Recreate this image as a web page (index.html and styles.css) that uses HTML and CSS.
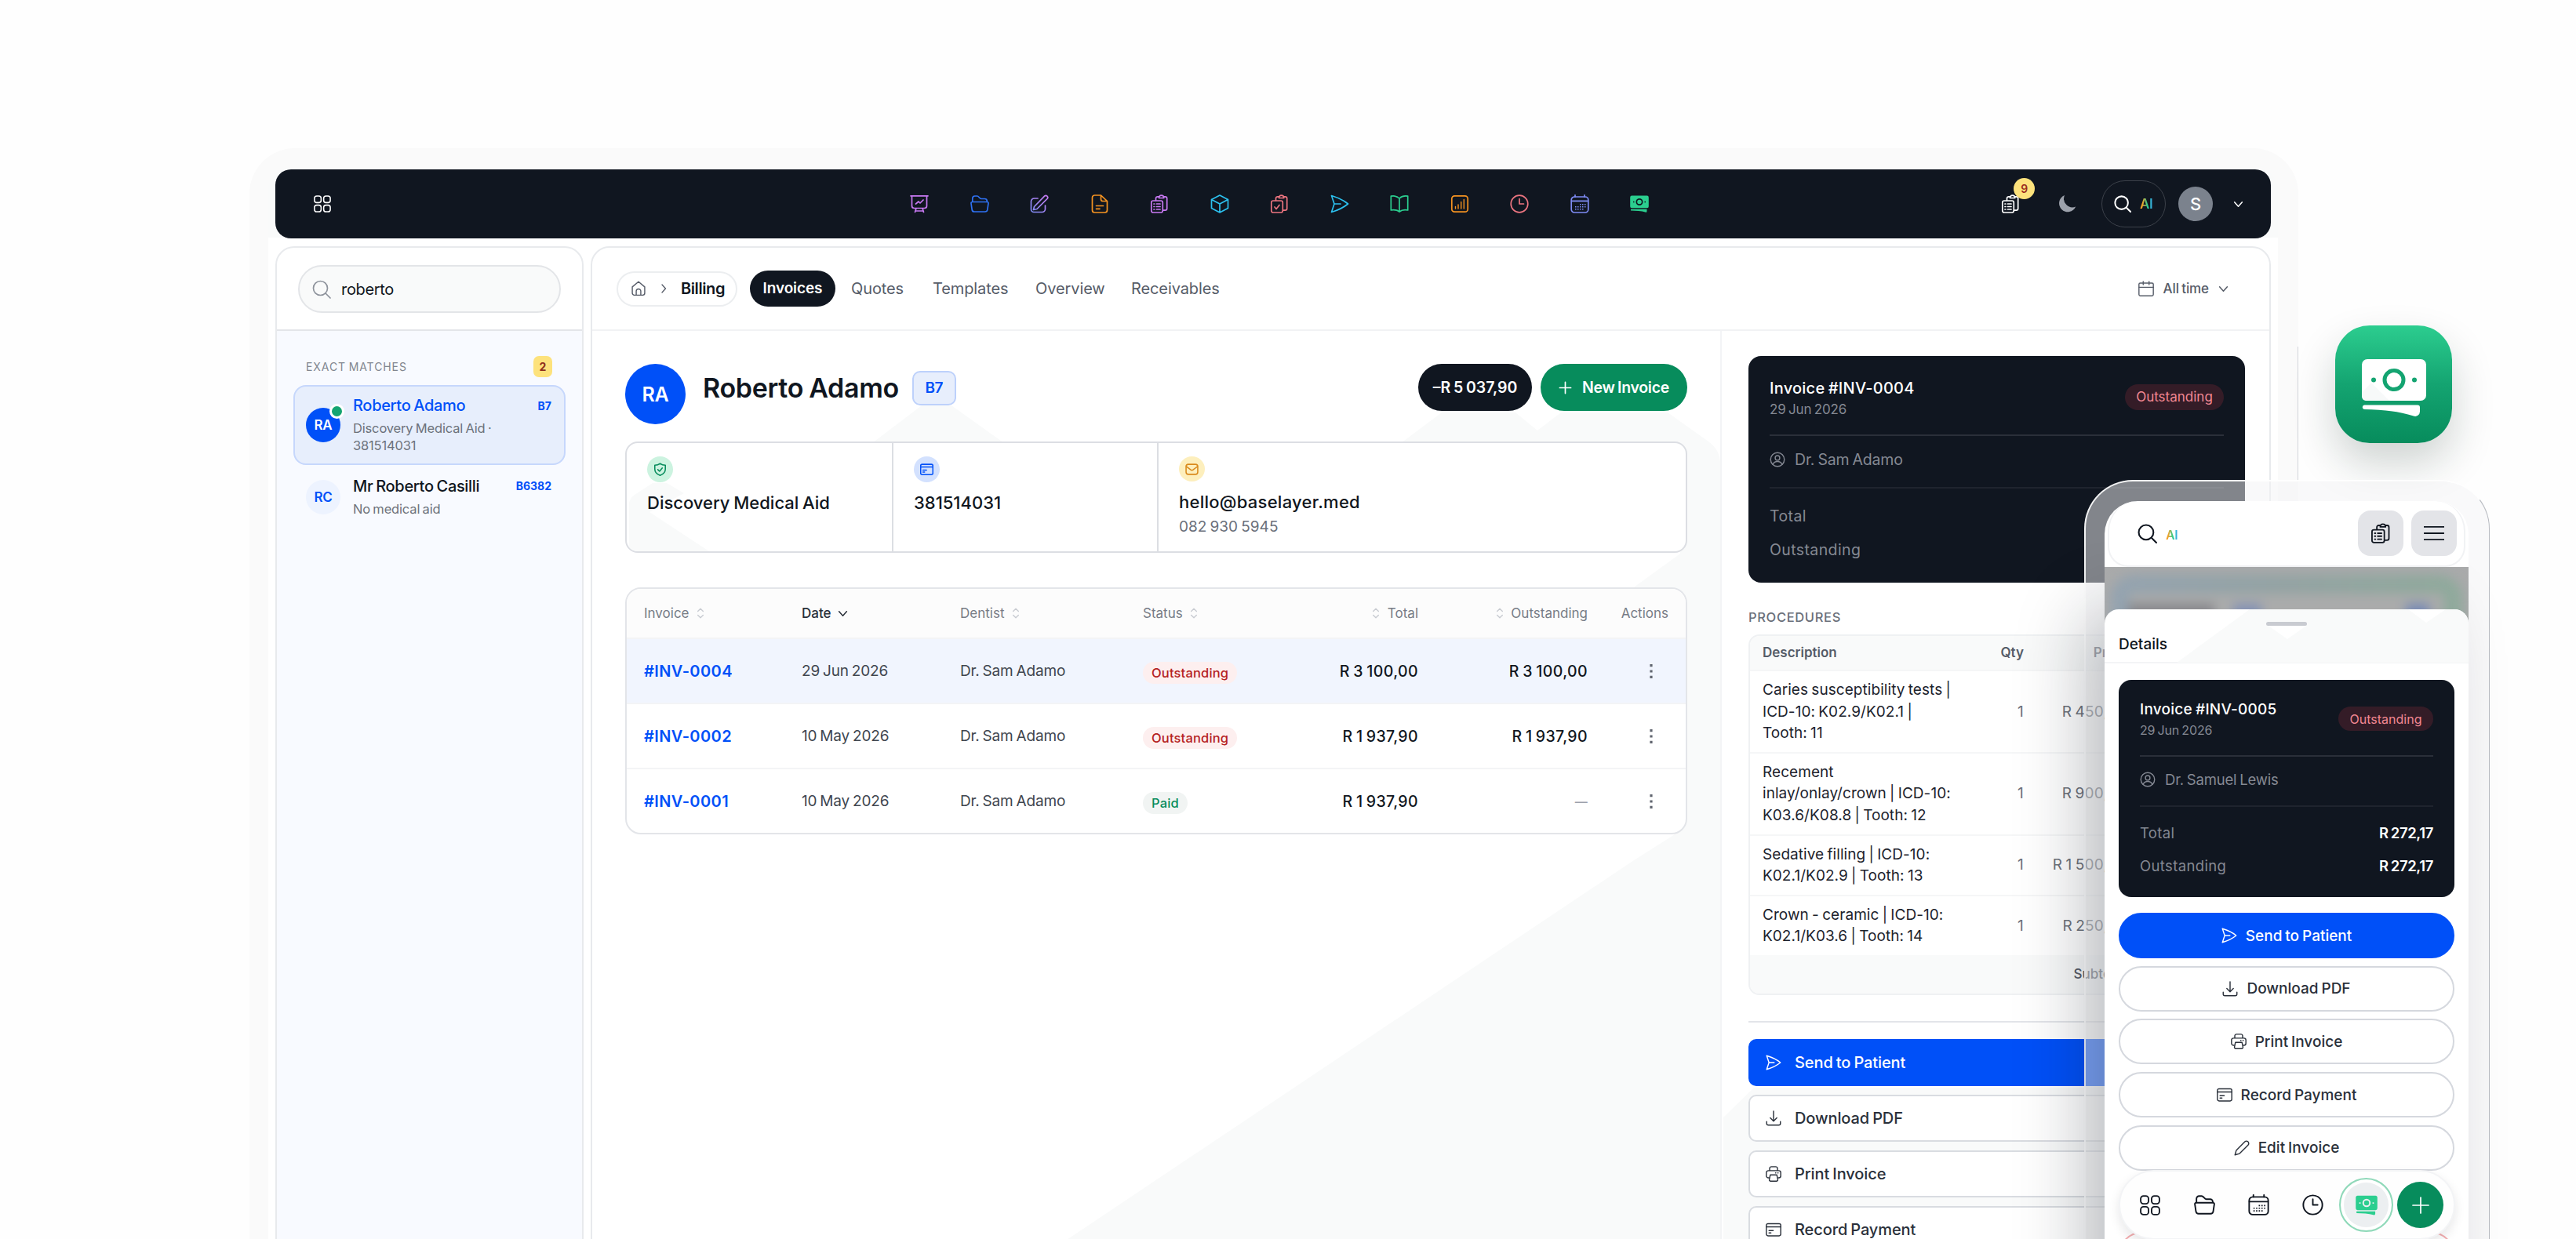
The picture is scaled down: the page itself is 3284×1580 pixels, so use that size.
FILE: index.html
```html
<!DOCTYPE html>
<html lang="en">
<head>
    <meta charset="UTF-8">
    <title>Billing - Invoices</title>
    <link rel="stylesheet" href="styles.css">
</head>
<body>

<!-- icon set -->
<svg class="sprite" xmlns="http://www.w3.org/2000/svg">
    <defs>
        <linearGradient id="violet" x1="0" y1="1" x2="1" y2="0"><stop offset="0" stop-color="#7d8cf5"/><stop offset="1" stop-color="#c77af0"/></linearGradient>
        <symbol id="grid" viewBox="0 0 24 24"><rect x="1" y="1" width="9.200" height="9.200" rx="3.200"/><rect x="13.800" y="1" width="9.200" height="9.200" rx="3.200"/><rect x="1" y="13.800" width="9.200" height="9.200" rx="3.200"/><rect x="13.800" y="13.800" width="9.200" height="9.200" rx="3.200"/></symbol>
        <symbol id="board" viewBox="0 0 24 24"><path d="M1 1.800h22M2.500 2v12.500a3 3 0 0 0 3 3h13a3 3 0 0 0 3-3V2M8 17.500l-1.500 5M16 17.500l1.500 5M7 21h10M7.500 12l3.500-3 2 2 4-4"/></symbol>
        <symbol id="folder" viewBox="0 0 24 24"><path d="M2.800 9.500V5a3 3 0 0 1 3-3h3c2 0 3 3.500 5 3.500h4.500a3 3 0 0 1 3 3v1M2.500 9.500h19a1.500 1.500 0 0 1 1.500 1.800l-1.200 8.200a3 3 0 0 1-3 2.500H5.200a3 3 0 0 1-3-2.500L1 11.300a1.500 1.500 0 0 1 1.500-1.800z"/></symbol>
        <symbol id="compose" viewBox="0 0 24 24"><path d="M10 5H5.500a4 4 0 0 0-4 4v10a3.500 3.500 0 0 0 3.500 3.500h10.500a4 4 0 0 0 4-4V14M5.500 15.500L18.500 2.200a2.300 2.300 0 0 1 3.500 3.300L9 18.500l-4.500 1z"/></symbol>
        <symbol id="file" viewBox="0 0 24 24"><path d="M13.500 1H5.500a3 3 0 0 0-3 3v16a3 3 0 0 0 3 3h13a3 3 0 0 0 3-3V8.500zM13.500 1v5A2.500 2.500 0 0 0 16 8.500h5.500M7.500 14.500h9M7.500 18.300h4.500"/></symbol>
        <symbol id="clips" viewBox="0 0 24 24"><path d="M7.500 7.500V5A2.200 2.200 0 0 1 9.700 2.800h2M17.500 2.800h2A2.200 2.200 0 0 1 21.700 5v13a2.200 2.200 0 0 1-2.200 2.200h-3M11.500 4.500c0-2 1-3.300 3-3.300s3.200 1.300 3.200 3.300z"/><rect x="1.800" y="8" width="14.500" height="15" rx="2.200"/><path d="M5 12h.8M8.500 12h4.500M5 15.500h.8M8.500 15.500h4.500M5 19h.8M8.500 19h4.500"/></symbol>
        <symbol id="clipcheck" viewBox="0 0 24 24"><path d="M7.500 7.500V5A2.200 2.200 0 0 1 9.700 2.800h2M17.500 2.800h2A2.200 2.200 0 0 1 21.700 5v13a2.200 2.200 0 0 1-2.200 2.200h-3M11.500 4.500c0-2 1-3.300 3-3.300s3.200 1.300 3.200 3.300z"/><rect x="1.800" y="8" width="14.500" height="15" rx="2.200"/><path d="M6 16l2 2.500 4-5"/></symbol>
        <symbol id="box" viewBox="0 0 24 24"><path d="M12 1l10.500 5.500v11L12 23 1.500 17.500v-11zM1.500 6.500L12 12l10.500-5.500M12 12v11"/></symbol>
        <symbol id="send" viewBox="0 0 24 24"><path d="M1.500 1.500C10 4 17 7.500 22.500 12 17 16.500 10 20 1.500 22.500L5 12zM5 12h8"/></symbol>
        <symbol id="book" viewBox="0 0 24 24"><path d="M12 5C9 2.200 5 1.500 1.300 2.200V20c4-.7 8-.2 10.700 2 2.700-2.200 6.700-2.700 10.700-2V2.200C19 1.500 15 2.200 12 5zM12 5v17"/></symbol>
        <symbol id="chart" viewBox="0 0 24 24"><rect x="1.800" y="1.800" width="20.400" height="20.400" rx="3.500"/><path stroke-width="1.400" d="M6.500 18v-2.500M10 18v-5M13.700 18V9.500M17.300 18V6.500"/></symbol>
        <symbol id="clock" viewBox="0 0 24 24"><circle cx="12" cy="12" r="10.800"/><path d="M12 5.500V12h5.500"/></symbol>
        <symbol id="calendar" viewBox="0 0 24 24"><rect x="1.200" y="3" width="21.600" height="20" rx="4"/><path d="M1.500 8.300h21M6 .8V3M18 .8V3"/><path fill="currentColor" stroke="none" d="M12 12h1.500v1.500H12zm3 0h1.500v1.500H15zm3 0h1.500v1.500H18zM6 15h1.500v1.500H6zm3 0h1.500v1.500H9zm3 0h1.500v1.500H12zm3 0h1.500v1.500H15zm3 0h1.500v1.500H18zM6 18h1.500v1.500H6zm3 0h1.500v1.500H9zm3 0h1.500v1.500H12zm3 0h1.500v1.500H15z"/></symbol>
        <symbol id="cash" viewBox="0 0 24 24"><path fill="currentColor" stroke="none" fill-rule="evenodd" d="M2.500 1.500h19A2.200 2.200 0 0 1 23.800 3.700v11.600a2 2 0 0 1-2 2H2.200a2 2 0 0 1-2-2V3.700a2.200 2.200 0 0 1 2.300-2.200zM12 5a4.500 4.500 0 1 0 0 9 4.500 4.500 0 0 0 0-9zm0 1.700a2.800 2.800 0 1 1 0 5.600 2.800 2.800 0 0 1 0-5.600zM4 8.700v1.600h1.500V8.700zm14.500 0v1.600H20V8.700zM1 18.700h20.500v2.500a1.500 1.500 0 0 1-2 1.400c-5-1.600-12-1.900-18.500-2.100z"/></symbol>
        <symbol id="moon" viewBox="0 0 24 24"><path fill="currentColor" stroke="none" d="M9 1A11 11 0 1 0 23.200 15.500 11 11 0 0 1 9 1z"/></symbol>
        <symbol id="search" viewBox="0 0 24 24"><circle cx="10.500" cy="10.500" r="9"/><path d="M17.500 17.500L23 23"/></symbol>
        <symbol id="down" viewBox="0 0 12 12"><path d="M1.500 3.500L6 8.500l4.500-5"/></symbol>
        <symbol id="right" viewBox="0 0 12 12"><path d="M4 1l4.500 5L4 11"/></symbol>
        <symbol id="sort" viewBox="0 0 12 18"><path d="M2 6l4-4 4 4M2 12l4 4 4-4"/></symbol>
        <symbol id="home" viewBox="0 0 24 24"><path d="M2.500 9.500L12 1.500l9.500 8V19a3 3 0 0 1-3 3h-13a3 3 0 0 1-3-3zM8.500 22v-6a3.500 3.500 0 0 1 7 0v6"/></symbol>
        <symbol id="date" viewBox="0 0 24 24"><rect x="1" y="3.500" width="22" height="19.500" rx="2"/><path d="M1 10h22M7.500 1v5M16.500 1v5"/></symbol>
        <symbol id="shield" viewBox="0 0 24 24"><path d="M12 1.500c3 2.300 6 3 9.500 3v7c0 5-3.500 9-9.500 11.500C6 20.500 2.500 16.500 2.500 11.500v-7c3.500 0 6.500-.7 9.500-3zM8 12.500l3 3 5-6"/></symbol>
        <symbol id="card" viewBox="0 0 24 24"><rect x="1" y="3" width="22" height="18.500" rx="2.500"/><path d="M1 7.700h22M5 13.500h6.500M5 17h3"/></symbol>
        <symbol id="mail" viewBox="0 0 24 24"><rect x="1.500" y="3" width="21" height="18" rx="4"/><path d="M2 7l8 6a3.500 3.500 0 0 0 4 0l8-6"/></symbol>
        <symbol id="plus" viewBox="0 0 24 24"><path d="M12 2v20M2 12h20"/></symbol>
        <symbol id="dots" viewBox="0 0 6 20"><path fill="currentColor" stroke="none" d="M1.400 1h3.200v3.200H1.400zM1.400 8.400h3.200v3.200H1.400zM1.400 15.800h3.200V19H1.400z"/></symbol>
        <symbol id="user" viewBox="0 0 24 24"><circle cx="12" cy="12" r="10.500"/><circle cx="12" cy="9.500" r="3.500"/><path d="M5 19.500c1.500-3.500 4-4.500 7-4.500s5.500 1 7 4.500"/></symbol>
        <symbol id="download" viewBox="0 0 24 24"><path d="M12 1v15M7 11.500l5 5 5-5M1.500 17v3a2.500 2.500 0 0 0 2.500 2.500h16a2.500 2.500 0 0 0 2.500-2.500v-3"/></symbol>
        <symbol id="print" viewBox="0 0 24 24"><path d="M6 7V3.500A2.500 2.500 0 0 1 8.500 1h7A2.500 2.500 0 0 1 18 3.500V7M5 18H4a3 3 0 0 1-3-3v-5a3 3 0 0 1 3-3h16a3 3 0 0 1 3 3v5a3 3 0 0 1-3 3h-1M15 10.500h.5M18.500 10.500h.5"/><path d="M7 13.500h10l1.500 7a2 2 0 0 1-2 2.500h-9a2 2 0 0 1-2-2.500z"/></symbol>
        <symbol id="pencil" viewBox="0 0 24 24"><path d="M1.500 22.500l2-7L16.500 2.500a3.400 3.400 0 0 1 5 5L8.500 20.500z"/></symbol>
        <symbol id="menu" viewBox="0 0 24 24"><path d="M.5 4.500h23M.5 12h23M.5 19.500h23"/></symbol>
    </defs>
</svg>

<div class="stage">

    <div class="device">
        <div class="screen">
            <header class="topbar">
                <svg class="icon i22"><use href="#grid"/></svg>
                <nav class="apps">
                    <svg class="icon c-pink"><use href="#board"/></svg>
                    <svg class="icon c-blue"><use href="#folder"/></svg>
                    <svg class="icon c-mix"><use href="#compose"/></svg>
                    <svg class="icon c-orange"><use href="#file"/></svg>
                    <svg class="icon c-pink"><use href="#clips"/></svg>
                    <svg class="icon c-cyan"><use href="#box"/></svg>
                    <svg class="icon c-rose"><use href="#clipcheck"/></svg>
                    <svg class="icon c-cyan"><use href="#send"/></svg>
                    <svg class="icon c-green"><use href="#book"/></svg>
                    <svg class="icon c-orange"><use href="#chart"/></svg>
                    <svg class="icon c-rose"><use href="#clock"/></svg>
                    <svg class="icon c-indigo"><use href="#calendar"/></svg>
                    <svg class="icon c-green"><use href="#cash"/></svg>
                </nav>
                <div class="tools">
                    <div class="tasks">
                        <svg class="icon"><use href="#clips"/></svg>
                        <span class="count">9</span>
                    </div>
                    <svg class="icon moon"><use href="#moon"/></svg>
                    <div class="ai-pill">
                        <svg class="icon i22"><use href="#search"/></svg>
                        <span class="ai">AI</span>
                    </div>
                    <div class="avatar avatar-me">S</div>
                    <svg class="icon chev"><use href="#down"/></svg>
                </div>
            </header>

            <div class="panels">
                <aside class="sidebar">
                    <div class="search-area">
                        <div class="search-box">
                            <svg class="icon"><use href="#search"/></svg>
                            <span>roberto</span>
                        </div>
                    </div>
                    <div class="results">
                        <div class="results-head">
                            <span>EXACT MATCHES</span>
                            <span class="num">2</span>
                        </div>
                        <div class="patient selected">
                            <div class="avatar avatar-sm">RA<i class="online"></i></div>
                            <div class="who">
                                <div class="name">Roberto Adamo</div>
                                <div class="aid">Discovery Medical Aid ·<br>381514031</div>
                            </div>
                            <span class="code">B7</span>
                        </div>
                        <div class="patient">
                            <div class="avatar avatar-sm pale">RC</div>
                            <div class="who">
                                <div class="name">Mr Roberto Casilli</div>
                                <div class="aid">No medical aid</div>
                            </div>
                            <span class="code">B6382</span>
                        </div>
                    </div>
                </aside>

                <main class="main">
                    <div class="subnav">
                        <div class="crumbs">
                            <svg class="icon i20"><use href="#home"/></svg>
                            <svg class="icon arrow"><use href="#right"/></svg>
                            <span>Billing</span>
                        </div>
                        <span class="tab active">Invoices</span>
                        <span class="tab t-quotes">Quotes</span>
                        <span class="tab t-templates">Templates</span>
                        <span class="tab t-overview">Overview</span>
                        <span class="tab t-receivables">Receivables</span>
                        <div class="range">
                            <svg class="icon i20"><use href="#date"/></svg>
                            <span>All time</span>
                            <svg class="icon chev"><use href="#down"/></svg>
                        </div>
                    </div>

                    <div class="columns">
                        <section class="billing">
                            <svg class="rays" viewBox="755 421 1438 1159">
                                <path d="M1112 564L1175 516H1213L1280 564zM1786 564L1838 525H1932L1960 548 1990 525H2126L2178 562Q2193 573 2193 590V1580H1360L2080 1098 2135 1063V750H2080L2142 705V564z"/>
                            </svg>
                            <div class="heading">
                                <div class="avatar avatar-lg">RA</div>
                                <h1>Roberto Adamo</h1>
                                <span class="code-box">B7</span>
                                <span class="pill dark">–R 5 037,90</span>
                                <span class="pill green"><svg class="icon"><use href="#plus"/></svg>New Invoice</span>
                            </div>

                            <div class="info">
                                <svg class="rays" viewBox="799 566 1350 138">
                                    <path d="M802 704V642Q804 634 812 630L832 617H850L872 630 828 654 904 704z"/>
                                </svg>
                                <div class="cell first">
                                    <div class="dot mint"><svg class="icon"><use href="#shield"/></svg></div>
                                    <b>Discovery Medical Aid</b>
                                </div>
                                <div class="cell">
                                    <div class="dot sky"><svg class="icon"><use href="#card"/></svg></div>
                                    <b>381514031</b>
                                </div>
                                <div class="cell">
                                    <div class="dot sand"><svg class="icon"><use href="#mail"/></svg></div>
                                    <b class="email">hello@baselayer.med</b>
                                    <span>082 930 5945</span>
                                </div>
                            </div>

                            <div class="table">
                                <div class="tr th">
                                    <span>Invoice <svg class="icon sort"><use href="#sort"/></svg></span>
                                    <span class="sorted">Date <svg class="icon chev"><use href="#down"/></svg></span>
                                    <span>Dentist <svg class="icon sort"><use href="#sort"/></svg></span>
                                    <span>Status <svg class="icon sort"><use href="#sort"/></svg></span>
                                    <span class="r"><svg class="icon sort"><use href="#sort"/></svg> Total</span>
                                    <span class="r"><svg class="icon sort"><use href="#sort"/></svg> Outstanding</span>
                                    <span class="r">Actions</span>
                                </div>
                                <div class="tr current">
                                    <a>#INV-0004</a><span>29 Jun 2026</span><span>Dr. Sam Adamo</span>
                                    <span><em class="badge red">Outstanding</em></span>
                                    <span class="money">R 3 100,00</span><span class="money">R 3 100,00</span>
                                    <span class="more"><svg class="icon"><use href="#dots"/></svg></span>
                                </div>
                                <div class="tr">
                                    <a>#INV-0002</a><span>10 May 2026</span><span>Dr. Sam Adamo</span>
                                    <span><em class="badge red">Outstanding</em></span>
                                    <span class="money">R 1 937,90</span><span class="money">R 1 937,90</span>
                                    <span class="more"><svg class="icon"><use href="#dots"/></svg></span>
                                </div>
                                <div class="tr">
                                    <a>#INV-0001</a><span>10 May 2026</span><span>Dr. Sam Adamo</span>
                                    <span><em class="badge paid">Paid</em></span>
                                    <span class="money">R 1 937,90</span><span class="money none">—</span>
                                    <span class="more"><svg class="icon"><use href="#dots"/></svg></span>
                                </div>
                            </div>
                        </section>

                        <section class="detail">
                            <svg class="rays" viewBox="2195 421 698 1159">
                                <path d="M2197 1424L2236 1386H2860V1580H2197z"/>
                            </svg>
                            <div class="invoice">
                                <div class="inv-head">
                                    <div>
                                        <div class="inv-title">Invoice #INV-0004</div>
                                        <div class="inv-date">29 Jun 2026</div>
                                    </div>
                                    <em class="tag">Outstanding</em>
                                </div>
                                <div class="inv-doc"><svg class="icon i20"><use href="#user"/></svg>Dr. Sam Adamo</div>
                                <div class="inv-row"><span>Total</span></div>
                                <div class="inv-row"><span>Outstanding</span></div>
                            </div>

                            <h3>PROCEDURES</h3>
                            <div class="procs">
                                <div class="proc proc-head"><span>Description</span><span>Qty</span><span>Price</span></div>
                                <div class="proc"><p>Caries susceptibility tests |<br>ICD-10: K02.9/K02.1 |<br>Tooth: 11</p><span>1</span><span>R 450,00</span></div>
                                <div class="proc"><p>Recement<br>inlay/onlay/crown | ICD-10:<br>K03.6/K08.8 | Tooth: 12</p><span>1</span><span>R 900,00</span></div>
                                <div class="proc"><p>Sedative filling | ICD-10:<br>K02.1/K02.9 | Tooth: 13</p><span>1</span><span>R 1 500,00</span></div>
                                <div class="proc"><p>Crown - ceramic | ICD-10:<br>K02.1/K03.6 | Tooth: 14</p><span>1</span><span>R 250,00</span></div>
                                <div class="proc proc-foot"><span></span><span></span><span>Subtotal</span></div>
                            </div>

                            <div class="actions">
                                <div class="action primary"><svg class="icon i20"><use href="#send"/></svg>Send to Patient</div>
                                <div class="action"><svg class="icon i20"><use href="#download"/></svg>Download PDF</div>
                                <div class="action"><svg class="icon i20"><use href="#print"/></svg>Print Invoice</div>
                                <div class="action"><svg class="icon i20"><use href="#card"/></svg>Record Payment</div>
                            </div>
                        </section>
                    </div>
                </main>
            </div>
        </div>
    </div>

    <div class="guide"></div>

    <div class="app-icon">
        <svg viewBox="0 0 82 74">
            <rect width="82" height="53" rx="7" fill="#fff"/>
            <path d="M0 47V43L12 30 35 53H6Q0 53 0 47z" fill="#f7f9f9"/>
            <circle cx="41" cy="26.500" r="12" fill="none" stroke="#14a471" stroke-width="5"/>
            <circle cx="15" cy="26.500" r="3" fill="#14a471"/>
            <circle cx="67" cy="26.500" r="3" fill="#14a471"/>
            <path d="M3 58.500H71a3 3 0 0 1 3 3V67a6 6 0 0 1-8 5.500C46 66 26 64.500 3 64a2.800 2.800 0 0 1 0-5.500z" fill="#fff"/>
        </svg>
    </div>

    <div class="phone">
        <div class="phone-screen">
            <div class="phone-top">
                <svg class="icon"><use href="#search"/></svg>
                <span class="ai">AI</span>
                <div class="sq"><svg class="icon"><use href="#clips"/></svg></div>
                <div class="sq"><svg class="icon"><use href="#menu"/></svg></div>
            </div>
            <div class="backdrop"><div class="glow"><i></i><i></i><i></i></div></div>
            <div class="sheet">
                <div class="sheet-head">
                    <svg class="rays" viewBox="2683 777 464 68">
                        <path d="M2775 845L2868 777H3070L3093 794 3118 777H3147V845zM2892 798L2916 815 2940 798z" fill-rule="evenodd"/>
                    </svg>
                    <i class="handle"></i>
                    <span>Details</span>
                </div>
                <div class="sheet-body">
                    <div class="invoice">
                        <div class="inv-head">
                            <div>
                                <div class="inv-title">Invoice #INV-0005</div>
                                <div class="inv-date">29 Jun 2026</div>
                            </div>
                            <em class="tag">Outstanding</em>
                        </div>
                        <div class="inv-doc"><svg class="icon i20"><use href="#user"/></svg>Dr. Samuel Lewis</div>
                        <div class="inv-row"><span>Total</span><b>R 272,17</b></div>
                        <div class="inv-row"><span>Outstanding</span><b>R 272,17</b></div>
                    </div>
                    <div class="btn primary"><svg class="icon i20"><use href="#send"/></svg>Send to Patient</div>
                    <div class="btn"><svg class="icon i20"><use href="#download"/></svg>Download PDF</div>
                    <div class="btn"><svg class="icon i20"><use href="#print"/></svg>Print Invoice</div>
                    <div class="btn"><svg class="icon i20"><use href="#card"/></svg>Record Payment</div>
                    <div class="btn"><svg class="icon i20"><use href="#pencil"/></svg>Edit Invoice</div>
                    <div class="btn danger"></div>
                </div>
            </div>
            <nav class="tabbar">
                <svg class="icon"><use href="#grid"/></svg>
                <svg class="icon"><use href="#folder"/></svg>
                <svg class="icon"><use href="#calendar"/></svg>
                <svg class="icon"><use href="#clock"/></svg>
                <div class="on"><svg class="icon"><use href="#cash"/></svg></div>
                <div class="add"><svg class="icon"><use href="#plus"/></svg></div>
            </nav>
        </div>
    </div>

</div>

</body>
</html>
```
FILE: styles.css
```css
* {
    box-sizing: border-box;
}
body {
    margin: 0;
    background: #fefefe;
    font-family: Inter, "Liberation Sans", sans-serif;
    color: #101620;
    letter-spacing: -0.02em;
    word-spacing: -0.07em;
    overflow: hidden;
}
.sprite {
    position: absolute;
    width: 0;
    height: 0;
}
.icon {
    width: 24px;
    height: 24px;
    flex: none;
    fill: none;
    stroke: currentColor;
    stroke-width: 1.7;
    stroke-linejoin: round;
    stroke-linecap: round;
}
.i22 { width: 22px; height: 22px; }
.i20 { width: 20px; height: 20px; }
.icon.chev { width: 13px; height: 13px; stroke-width: 1.4; }
.stage {
    position: relative;
    width: 3284px;
    height: 1580px;
    padding: 189px 0 0 318px;
    overflow: hidden;
}

/* desktop window */
.device {
    width: 2612px;
    height: 1440px;
    padding: 25px 26px 0 24px;
    border-radius: 58px 58px 0 0;
    background: #fafafa;
}
.screen {
    height: 1400px;
    padding: 2px 9px 0;
    border-radius: 28px 28px 0 0;
    background: linear-gradient(#f9fafa 89px, #fff 89px);
}
.topbar {
    display: flex;
    align-items: center;
    height: 88px;
    margin-bottom: 10px;
    padding: 0 35px 0 49px;
    border-radius: 20px;
    background: #101620;
    color: #fff;
}
.apps {
    display: flex;
    gap: 52.5px;
    margin-left: 738px;
}
.c-pink { color: #c879f2; }
.c-blue { color: #2f72f3; }
.c-mix { stroke: url(#violet); }
.c-indigo { color: #7f8cf5; }
.c-orange { color: #f59321; }
.c-cyan { color: #2cc0ee; }
.c-rose { color: #ec7580; }
.c-green { color: #2bce8f; }
.tools {
    display: flex;
    align-items: center;
    margin-left: auto;
}
.tasks {
    position: relative;
    height: 24px;
}
.count {
    position: absolute;
    left: 16px;
    top: -21px;
    width: 27px;
    height: 27px;
    border-radius: 50%;
    background: #fde27c;
    color: #9b2c1c;
    font-size: 14px;
    font-weight: 600;
    line-height: 27px;
    text-align: center;
}
.moon {
    margin: 0 32px 0 48px;
    color: #9ca1ab;
}
.ai-pill {
    display: flex;
    align-items: center;
    gap: 11px;
    width: 82px;
    height: 60px;
    padding-left: 15px;
    border: 1.5px solid #3c414a;
    border-radius: 30px;
}
.ai-pill .icon { stroke-width: 2.2; }
.ai {
    font-size: 17px;
    font-weight: 600;
    background: linear-gradient(90deg, #f3a128 20%, #2bce8f 60%, #3aa9f0);
    background-clip: text;
    color: transparent;
}
.avatar {
    display: flex;
    align-items: center;
    justify-content: center;
    flex: none;
    border-radius: 50%;
    background: #0050f8;
    color: #fff;
    font-weight: 600;
}
.avatar-me {
    width: 44px;
    height: 44px;
    margin: 0 26px 0 16px;
    background: #7b828d;
    font-size: 22px;
    font-weight: 500;
}

.panels {
    display: flex;
    gap: 9px;
    height: 1300px;
}
.sidebar, .main {
    border: 2px solid #e8eaed;
    border-radius: 24px 24px 0 0;
    background: #fff;
    overflow: hidden;
}
.sidebar {
    width: 393px;
    flex: none;
}
.main {
    flex: 1;
    min-width: 0;
}
.search-area {
    height: 106px;
    padding: 22px 27px;
    border-bottom: 2px solid #e3e5e9;
}
.search-box {
    display: flex;
    align-items: center;
    gap: 13px;
    height: 61px;
    padding: 0 16px;
    border: 2px solid #e3e5e8;
    border-radius: 31px;
    background: #f9fafa;
    font-size: 20px;
}
.search-box .icon { color: #8d929b; }
.results {
    height: 1200px;
    padding: 31px 21px;
    background: #f8faff;
}
.results-head {
    display: flex;
    align-items: center;
    justify-content: space-between;
    height: 28px;
    margin-bottom: 10px;
    padding: 0 17px 0 16px;
    color: #81868f;
    font-size: 14px;
    letter-spacing: 0.065em;
}
.num {
    width: 24px;
    height: 27px;
    border-radius: 7px;
    background: #fde27c;
    color: #8f2f1c;
    font-weight: 700;
    line-height: 27px;
    text-align: center;
    letter-spacing: 0;
}
.patient {
    display: flex;
    align-items: center;
    height: 82px;
    padding: 0 16px;
    border: 2px solid transparent;
    border-radius: 16px;
}
.patient.selected {
    height: 102px;
    border-color: #c6d7fc;
    background: #e7eefc;
}
.avatar-sm {
    position: relative;
    width: 44px;
    height: 44px;
    margin: 0 16px 0 -2px;
    font-size: 17px;
}
.avatar-sm.pale {
    background: #edf3ff;
    color: #0050f8;
}
.online {
    position: absolute;
    right: -5px;
    top: -5px;
    width: 19px;
    height: 19px;
    border: 3px solid #fff;
    border-radius: 50%;
    background: #14a471;
}
.who {
    flex: 1;
    white-space: nowrap;
}
.name {
    margin-bottom: 5px;
    font-size: 20px;
    font-weight: 500;
    line-height: 25px;
}
.selected .name { color: #0050f8; }
.aid {
    color: #6d727b;
    font-size: 16.500px;
    line-height: 22.500px;
    letter-spacing: -0.01em;
}
.code {
    align-self: flex-start;
    margin-top: 16px;
    color: #0050f8;
    font-size: 14px;
    font-weight: 700;
    letter-spacing: 0;
}

.subnav {
    display: flex;
    align-items: center;
    height: 106px;
    padding: 0 52px 0 31px;
    border-bottom: 2px solid #f1f2f4;
    color: #565c68;
    font-size: 20px;
    letter-spacing: -0.005em;
}
.crumbs {
    display: flex;
    align-items: center;
    width: 154px;
    height: 45px;
    margin-right: 16px;
    padding-left: 16px;
    border: 2px solid #eceef0;
    border-radius: 23px;
}
.crumbs span {
    color: #101620;
    font-weight: 600;
    letter-spacing: -0.02em;
}
.icon.arrow {
    width: 12px;
    height: 14px;
    margin: 0 16px;
    stroke-width: 1.3;
}
.tab.active {
    width: 109px;
    height: 46px;
    margin-right: 20px;
    border-radius: 23px;
    background: #101620;
    color: #fff;
    font-weight: 600;
    font-size: 19px;
    line-height: 46px;
    text-align: center;
}
.t-quotes { width: 104px; }
.t-templates { width: 131px; }
.t-overview { width: 122px; }
.range {
    display: flex;
    align-items: center;
    gap: 12px;
    margin-left: auto;
    font-size: 17px;
    font-weight: 500;
}

.columns {
    display: flex;
    height: 1200px;
}
.billing {
    position: relative;
    width: 1440px;
    padding: 42px 42px 0;
    border-right: 2px solid #f3f4f6;
}
.rays {
    position: absolute;
    left: 0;
    top: 0;
    width: 100%;
    fill: #f9fafa;
}
.heading {
    position: relative;
    display: flex;
    align-items: flex-start;
    height: 99px;
}
.avatar-lg {
    width: 77px;
    height: 77px;
    font-size: 25px;
}
.heading h1 {
    margin: 8px 17px 0 22px;
    font-size: 34px;
    font-weight: 600;
    line-height: 46px;
}
.code-box {
    width: 56px;
    height: 44px;
    margin-top: 9px;
    border: 2px solid #bdd1fb;
    border-radius: 10px;
    background: #e7eefc;
    color: #0050f8;
    font-size: 19px;
    font-weight: 600;
    line-height: 40px;
    text-align: center;
}
.pill {
    display: flex;
    align-items: center;
    justify-content: center;
    height: 60px;
    border-radius: 30px;
    color: #fff;
    font-size: 19.500px;
    font-weight: 600;
}
.pill.dark {
    width: 145px;
    margin: 0 11px 0 auto;
    background: #101620;
    letter-spacing: 0;
}
.pill.green {
    width: 187px;
    gap: 13px;
    background: #078c5c;
    letter-spacing: -0.015em;
}
.pill .icon { width: 17px; height: 17px; stroke-width: 2.4; }

.info {
    position: relative;
    display: flex;
    height: 142px;
    margin-bottom: 44px;
    border: 2px solid #dcdee3;
    border-radius: 16px;
    background: #fff;
    overflow: hidden;
}
.cell {
    position: relative;
    display: flex;
    flex-direction: column;
    width: 338px;
    padding: 17px 26px;
    border-right: 2px solid #dcdee3;
}
.cell.first { width: 340px; }
.cell:last-child {
    flex: 1;
    border: 0;
}
.cell b {
    margin-top: 12px;
    font-size: 22px;
    font-weight: 500;
    line-height: 28px;
    letter-spacing: 0;
}
.cell b.email { letter-spacing: 0.012em; }
.cell > span {
    margin-top: 4px;
    color: #6a6f7a;
    font-size: 19px;
    line-height: 28px;
    letter-spacing: 0;
}
.dot {
    display: flex;
    align-items: center;
    justify-content: center;
    width: 33px;
    height: 33px;
    border-radius: 50%;
}
.dot .icon { width: 17px; height: 17px; stroke-width: 2.2; }
.mint { background: #ccf3e0; color: #078c5c; }
.sky { background: #d3e1fe; color: #0050f8; }
.sand { background: #fdefbd; color: #d98a1c; }

.table {
    position: relative;
    border: 2px solid #e3e5e9;
    border-radius: 20px;
    background: #fff;
    overflow: hidden;
}
.tr {
    display: grid;
    grid-template-columns: 201px 202px 233px 135px 216px 216px 103px;
    align-items: center;
    height: 83px;
    padding: 0 22px;
    border-top: 2px solid #f3f4f6;
    color: #40464f;
    font-size: 19px;
    letter-spacing: -0.01em;
}
.tr.th {
    height: 62px;
    border: 0;
    background: #fcfcfc;
    color: #777c86;
    font-size: 17px;
    letter-spacing: 0;
}
.tr.current {
    background: #f1f5fe;
}
.tr a {
    color: #0050f8;
    font-weight: 600;
    font-size: 20px;
    letter-spacing: 0.02em;
}
.th .sort {
    width: 10px;
    height: 16px;
    margin: 0 6px;
    vertical-align: -2px;
    color: #c9ccd2;
}
.th .chev {
    margin: 0 5px;
    vertical-align: -1px;
}
.sorted {
    color: #2a303a;
    font-weight: 500;
}
.r, .money {
    text-align: right;
}
.money {
    color: #101620;
    font-weight: 500;
    font-size: 19.500px;
    letter-spacing: 0.02em;
}
.money.none { color: #9ca1ab; font-size: 16px; }
.more {
    padding-right: 19px;
    text-align: right;
    color: #60656f;
    line-height: 0;
}
.more .icon { width: 6px; height: 20px; }
.badge {
    display: inline-block;
    height: 28px;
    margin-top: 4px;
    padding: 0 11px;
    border-radius: 14px;
    font-size: 16.500px;
    font-style: normal;
    font-weight: 500;
    line-height: 28px;
    letter-spacing: 0.01em;
}
.badge.red { background: #fdefef; color: #b52222; }
.badge.paid { background: #f1f4f3; color: #078c5c; }

/* right column */
.detail {
    position: relative;
    flex: 1;
    padding: 32px 31px 0 34px;
}
.detail > div { position: relative; }
.invoice {
    height: 289px;
    padding: 0 27px;
    border-radius: 16px;
    background: #101620;
    color: #fff;
}
.inv-head {
    display: flex;
    align-items: center;
    justify-content: space-between;
    height: 102px;
    padding-top: 8px;
    border-bottom: 2px solid #2a2f39;
}
.inv-title {
    font-size: 20px;
    font-weight: 500;
    line-height: 28px;
    letter-spacing: 0.012em;
}
.inv-date {
    color: #858993;
    font-size: 17px;
    line-height: 26px;
    letter-spacing: -0.01em;
}
.tag {
    width: 126px;
    height: 33px;
    margin-bottom: 3px;
    border-radius: 17px;
    background: #341c27;
    color: #f28792;
    font-size: 17px;
    font-style: normal;
    line-height: 33px;
    text-align: center;
    letter-spacing: 0;
}
.inv-doc {
    display: flex;
    align-items: center;
    gap: 12px;
    height: 67px;
    margin-bottom: 13px;
    padding-bottom: 5px;
    border-bottom: 2px solid #1f242e;
    color: #858993;
    font-size: 19.500px;
    letter-spacing: -0.01em;
}
.inv-row {
    display: flex;
    align-items: center;
    justify-content: space-between;
    height: 43px;
    color: #858993;
    font-size: 19.500px;
    letter-spacing: 0.02em;
}
.inv-row b {
    color: #fff;
    font-weight: 600;
    letter-spacing: -0.02em;
}
.detail h3 {
    margin: 34px 0 11px;
    color: #6a6f7a;
    font-size: 16.500px;
    font-weight: 500;
    line-height: 21px;
    letter-spacing: 0.04em;
}
.procs {
    margin-bottom: 33px;
    border: 2px solid #eff1f3;
    border-radius: 14px;
    background: #fff;
    overflow: hidden;
}
.proc {
    display: grid;
    grid-template-columns: 263px 70px 131px;
    align-items: center;
    padding: 10px 16px;
    border-top: 2px solid #f5f6f7;
    color: #6d727b;
    font-size: 19px;
    line-height: 27.600px;
    letter-spacing: 0.01em;
}
.proc p {
    margin: 0;
    color: #1d232d;
    white-space: nowrap;
    letter-spacing: 0.003em;
}
.proc span + span, .proc p ~ span {
    text-align: right;
}
.proc-head, .proc-foot {
    height: 43px;
    padding: 0 16px;
    border: 0;
    background: #f9fafa;
    color: #565c68;
    font-size: 17px;
    font-weight: 600;
    letter-spacing: 0;
}
.proc-foot {
    height: 49px;
    font-weight: 500;
}
.actions {
    display: flex;
    flex-direction: column;
    gap: 11px;
    padding-top: 21px;
    border-top: 2px solid #e3e5e9;
}
.action {
    display: flex;
    align-items: center;
    gap: 17px;
    height: 60px;
    padding-left: 20px;
    border: 2px solid #d9dce1;
    border-radius: 10px;
    background: #fff;
    color: #2a303a;
    font-size: 20px;
    font-weight: 500;
    letter-spacing: -0.005em;
}
.primary, .action.primary {
    border-color: #0050f8;
    background: #0050f8;
    color: #fff;
}

/* floating app icon */
.guide {
    position: absolute;
    left: 2929px;
    top: 442px;
    width: 192px;
    height: 172px;
    border-left: 1px solid #d3d5db;
    border-bottom: 1px solid #d3d5db;
}
.app-icon {
    position: absolute;
    left: 2977px;
    top: 415px;
    display: flex;
    justify-content: center;
    width: 149px;
    height: 150px;
    padding-top: 43px;
    border-radius: 44px;
    background: linear-gradient(#2ccd8f, #14a471 50%, #078c5c);
    box-shadow: 0 26px 54px rgba(16, 40, 30, 0.2);
}
.app-icon svg {
    width: 82px;
    height: 74px;
}

/* phone */
.phone {
    position: absolute;
    left: 2657px;
    top: 612px;
    width: 517px;
    height: 1060px;
    padding: 25px 24px;
    border: 2px solid rgba(255, 255, 255, 0.9);
    border-right: 1px solid #b9bcc2;
    border-radius: 62px;
    background: rgba(244, 244, 246, 0.5);
}
.phone-screen {
    position: relative;
    width: 464px;
    height: 1000px;
    border-radius: 42px;
    background: #fff;
    box-shadow: -34px 130px 90px -10px rgba(16, 22, 32, 0.27);
}
.phone-top {
    display: flex;
    align-items: center;
    height: 84px;
    margin: 0 4px;
    padding: 0 9px 0 36px;
    border: 2px solid #f1f2f4;
    border-top: 0;
    border-radius: 38px 38px 26px 26px;
}
.phone-top > .icon { width: 25px; height: 25px; stroke-width: 2; }
.phone-top .ai { margin: 4px auto 0 11px; font-size: 16px; }
.sq {
    display: flex;
    align-items: center;
    justify-content: center;
    width: 58px;
    height: 58px;
    margin-left: 10px;
    border-radius: 16px;
    background: #e3e4e8;
}
.sq .icon { width: 26px; height: 26px; }
.backdrop {
    height: 74px;
    background: #a9aaab;
    overflow: hidden;
}
.glow {
    display: flex;
    align-items: flex-start;
    gap: 24px;
    height: 110px;
    margin: 10px 8px 0;
    padding: 37px 22px;
    border-radius: 30px;
    background: linear-gradient(#aaabab, #aaabab) no-repeat 24px 24px / 400px 90px, linear-gradient(90deg, #94a3b0, #93a3a3 50%, #8faa9b);
    filter: blur(7px);
}
.glow i {
    width: 110px;
    height: 24px;
    background: #87878c;
}
.glow i:nth-child(2) { width: 36px; background: #8391b4; }
.glow i:nth-child(3) { width: 30px; margin-left: 160px; background: #7689b4; }
.sheet {
    position: relative;
    height: 842px;
    margin-top: -20px;
    border-radius: 18px 18px 0 0;
    background: #fff;
    overflow: hidden;
}
.sheet-head {
    position: relative;
    height: 69px;
    padding: 31px 18px 0;
    border-bottom: 2px solid #f3f4f6;
    font-size: 19px;
    font-weight: 500;
    line-height: 28px;
    letter-spacing: 0;
}
.sheet-head span { position: relative; }
.handle {
    position: absolute;
    left: 206px;
    top: 16px;
    width: 52px;
    height: 5px;
    border-radius: 3px;
    background: #c9cbd1;
}
.sheet-body {
    padding: 21px 18px;
}
.sheet .invoice {
    height: 277px;
    margin-bottom: 20px;
}
.sheet .inv-head { height: 98px; padding-top: 5px; }
.sheet .inv-title { line-height: 26px; font-size: 19px; }
.sheet .inv-date { font-size: 16px; }
.sheet .tag { width: 121px; height: 31px; font-size: 16px; line-height: 32px; }
.sheet .inv-doc { height: 64px; margin-bottom: 12px; font-size: 18.500px; }
.sheet .inv-row { height: 42px; font-size: 18.500px; }
.btn {
    display: flex;
    align-items: center;
    justify-content: center;
    gap: 11px;
    height: 58px;
    margin-bottom: 9.700px;
    border: 2px solid #d5d8de;
    border-radius: 30px;
    background: #fff;
    color: #2a303a;
    font-size: 19px;
    font-weight: 500;
    letter-spacing: 0;
}
.btn.primary {
    border-color: #0050f8;
    background: #0050f8;
    color: #fff;
}
.btn.danger {
    margin-top: 78px;
    border-color: #f3aeb0;
}
.tabbar {
    position: absolute;
    left: 18px;
    top: 853px;
    display: flex;
    align-items: center;
    width: 429px;
    height: 89px;
    padding-left: 25px;
    border: 2px solid #f3f4f6;
    border-radius: 45px;
    background: #fefefe;
    box-shadow: 0 6px 14px rgba(16, 22, 32, 0.1);
}
.tabbar > .icon {
    width: 27px;
    height: 27px;
    margin-right: 42px;
}
.tabbar > .icon:nth-child(1) { width: 26px; height: 26px; margin-right: 43px; }
.tabbar > .icon:nth-child(4) { margin-right: 20px; }
.on, .add {
    display: flex;
    align-items: center;
    justify-content: center;
    border-radius: 50%;
}
.on {
    width: 69px;
    height: 69px;
    border: 2px solid #8fd9b9;
    box-shadow: inset 0 0 0 4px #fff;
    background: #eceff1;
    color: #2bce8f;
}
.on .icon { width: 28px; height: 28px; }
.add {
    width: 59px;
    height: 59px;
    margin-left: 5px;
    background: #078c5c;
    color: #fff;
}
```
